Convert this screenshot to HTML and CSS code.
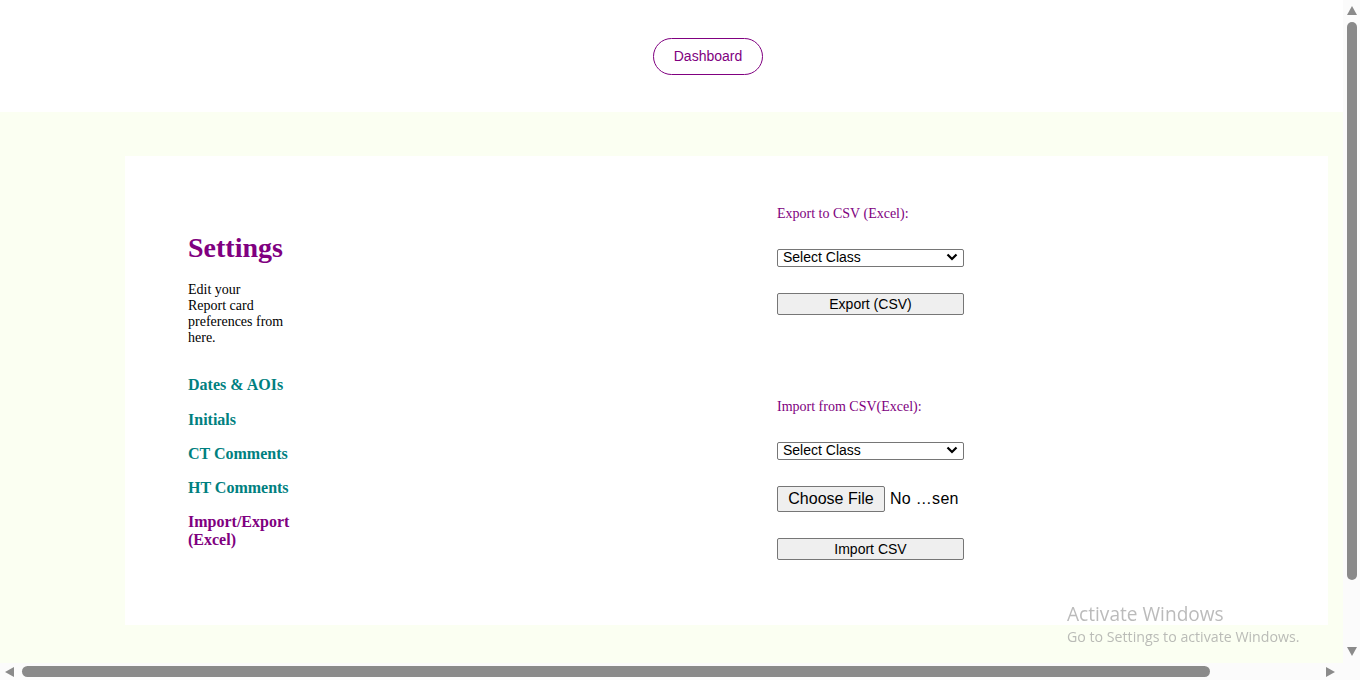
FILE: index.html
```html
<!DOCTYPE html>
<html lang="en">
<head>
    <meta charset="UTF-8">
    <meta name="viewport" content="width=device-width, initial-scale=1.0">
    <title>Settings</title>
    <link rel="stylesheet" href="styles.css">
</head>
<body>
    <div class="viewport">
        <!-- Top bar -->
        <div class="top-bar">
            <button class="dash-btn">Dashboard</button>
        </div>

        <div class="content">
            <div class="card">
                <!-- Left side menu -->
                <div class="side">
                    <h2>Settings</h2>
                    <p>Edit your<br>Report card<br>preferences from<br>here.</p>
                    <nav class="menu">
                        <a href="#">Dates &amp; AOIs</a>
                        <a href="#">Initials</a>
                        <a href="#">CT Comments</a>
                        <a href="#">HT Comments</a>
                        <a href="#" class="active">Import/Export<br>(Excel)</a>
                    </nav>
                </div>

                <!-- Import / export panel -->
                <div class="panel">
                    <label class="field-label">Export to CSV (Excel):</label>
                    <div class="select-box">
                        <select>
                            <option>Select Class</option>
                        </select>
                        <svg class="chevron" width="12" height="8" viewBox="0 0 12 8"><path d="M1.5 1.5 L6 6 L10.5 1.5" fill="none" stroke="#000" stroke-width="2.2"/></svg>
                    </div>
                    <button class="wide-btn export-btn">Export (CSV)</button>

                    <label class="field-label import-label">Import from CSV(Excel):</label>
                    <div class="select-box">
                        <select>
                            <option>Select Class</option>
                        </select>
                        <svg class="chevron" width="12" height="8" viewBox="0 0 12 8"><path d="M1.5 1.5 L6 6 L10.5 1.5" fill="none" stroke="#000" stroke-width="2.2"/></svg>
                    </div>
                    <div class="file-row">
                        <label class="file-btn">Choose File<input type="file" hidden></label>
                        <span class="file-name">No …sen</span>
                    </div>
                    <button class="wide-btn">Import CSV</button>
                </div>
            </div>
        </div>
    </div>

    <!-- Scrollbars -->
    <div class="vscroll">
        <svg width="10" height="9" viewBox="0 0 10 9"><polygon points="5,0 10,9 0,9" fill="#8a8a8a"/></svg>
        <div class="vthumb"></div>
        <div class="spacer"></div>
        <svg width="10" height="9" viewBox="0 0 10 9"><polygon points="0,0 10,0 5,9" fill="#8a8a8a"/></svg>
    </div>
    <div class="hscroll">
        <svg width="9" height="10" viewBox="0 0 9 10"><polygon points="9,0 9,10 0,5" fill="#8a8a8a"/></svg>
        <div class="hthumb"></div>
        <div class="spacer"></div>
        <svg width="9" height="10" viewBox="0 0 9 10"><polygon points="0,0 9,5 0,10" fill="#8a8a8a"/></svg>
    </div>
    <div class="corner"></div>

    <div class="watermark">
        <div class="wm-title">Activate Windows</div>
        <div class="wm-sub">Go to Settings to activate Windows.</div>
    </div>
</body>
</html>
```

FILE: styles.css
```css
/* Page frame with scrollbars */
body {
    margin: 0;
    height: 100vh;
    overflow: hidden;
    display: grid;
    grid-template-columns: 1fr 17px;
    grid-template-rows: 1fr 17px;
    font-family: "Liberation Serif", "Times New Roman", serif;
    background-color: #fff;
}

.viewport {
    overflow: hidden;
    display: flex;
    flex-direction: column;
}

/* Top bar */
.top-bar {
    height: 112px;
    flex-shrink: 0;
    display: flex;
    justify-content: center;
    align-items: flex-start;
    padding-left: 73px;
    box-sizing: border-box;
    background-color: #fff;
}

.dash-btn {
    margin-top: 38px;
    height: 37px;
    padding: 0 20px 1px;
    border: 1px solid #800080;
    border-radius: 20px;
    background-color: #fff;
    color: #800080;
    font-family: "Liberation Sans", Arial, sans-serif;
    font-size: 14px;
    cursor: pointer;
}

/* Main area */
.content {
    flex: 1;
    background-color: #fbfff2;
    padding: 44px 0 0 125px;
}

.card {
    width: 1203px;
    height: 469px;
    box-sizing: border-box;
    background-color: #fff;
    padding-left: 63px;
    display: grid;
    grid-template-columns: 589px auto;
}

.side {
    padding-top: 76px;
}

.side h2 {
    margin: 0;
    font-size: 28px;
    line-height: 32px;
    color: #800080;
}

.side p {
    margin: 18px 0 0;
    font-size: 14px;
    line-height: 16px;
    color: #000;
}

.menu {
    margin-top: 30px;
}

.menu a {
    display: block;
    font-size: 16px;
    line-height: 18px;
    font-weight: bold;
    color: #008080;
    text-decoration: none;
    margin-bottom: 16px;
}

.menu a:first-child {
    margin-bottom: 17px;
}

.menu a.active {
    color: #800080;
}

/* Import / export panel */
.panel {
    padding-top: 50px;
    display: flex;
    flex-direction: column;
    align-items: flex-start;
}

.field-label {
    display: block;
    font-size: 14px;
    line-height: 16px;
    color: #800080;
}

.import-label {
    margin-top: 84px;
}

.select-box {
    position: relative;
    margin-top: 26px;
    width: 187px;
    height: 18px;
}

.select-box select {
    appearance: none;
    -webkit-appearance: none;
    width: 100%;
    height: 100%;
    box-sizing: border-box;
    padding: 0 0 2px 5px;
    border: 1px solid #767676;
    border-radius: 2px;
    background-color: #fff;
    color: #000;
    font-family: "Liberation Sans", Arial, sans-serif;
    font-size: 14px;
    line-height: 14px;
}

.chevron {
    position: absolute;
    right: 6px;
    top: 5px;
    pointer-events: none;
}

.wide-btn {
    margin-top: 26px;
    width: 187px;
    height: 22px;
    padding: 0;
    border: 1px solid #767676;
    border-radius: 2px;
    background-color: #efefef;
    color: #000;
    font-family: "Liberation Sans", Arial, sans-serif;
    font-size: 14px;
    cursor: pointer;
}

.export-btn {
    margin-top: 27px;
}

.file-row {
    margin-top: 27px;
    display: flex;
    align-items: center;
    font-family: "Liberation Sans", Arial, sans-serif;
    font-size: 16px;
}

.file-btn {
    width: 108px;
    height: 26px;
    box-sizing: border-box;
    display: flex;
    align-items: center;
    justify-content: center;
    border: 1px solid #767676;
    border-radius: 2px;
    background-color: #efefef;
    color: #000;
    cursor: pointer;
}

.file-name {
    margin-left: 5px;
    color: #000;
    letter-spacing: 0.3px;
}

/* Scrollbars */
.vscroll {
    background-color: #fbfbfb;
    display: flex;
    flex-direction: column;
    align-items: center;
    padding: 6px 0 7px;
    box-sizing: border-box;
}

.vthumb {
    margin-top: 7px;
    width: 10px;
    height: 558px;
    border-radius: 5px;
    background-color: #8a8a8a;
}

.hscroll {
    background-color: #fbfbfb;
    display: flex;
    align-items: center;
    padding: 0 8px 0 5px;
}

.hthumb {
    margin-left: 8px;
    width: 1188px;
    height: 11px;
    border-radius: 6px;
    background-color: #8a8a8a;
}

.spacer {
    flex: 1;
}

.corner {
    background-color: #fbfbfb;
}

/* Windows activation watermark */
.watermark {
    position: fixed;
    left: 1067px;
    top: 601px;
    font-family: "Open Sans", "Noto Sans", sans-serif;
    color: rgba(150, 150, 150, 0.65);
    pointer-events: none;
}

.wm-title {
    font-size: 19.1px;
    line-height: 26px;
}

.wm-sub {
    font-size: 14.2px;
    line-height: 20px;
}
```
